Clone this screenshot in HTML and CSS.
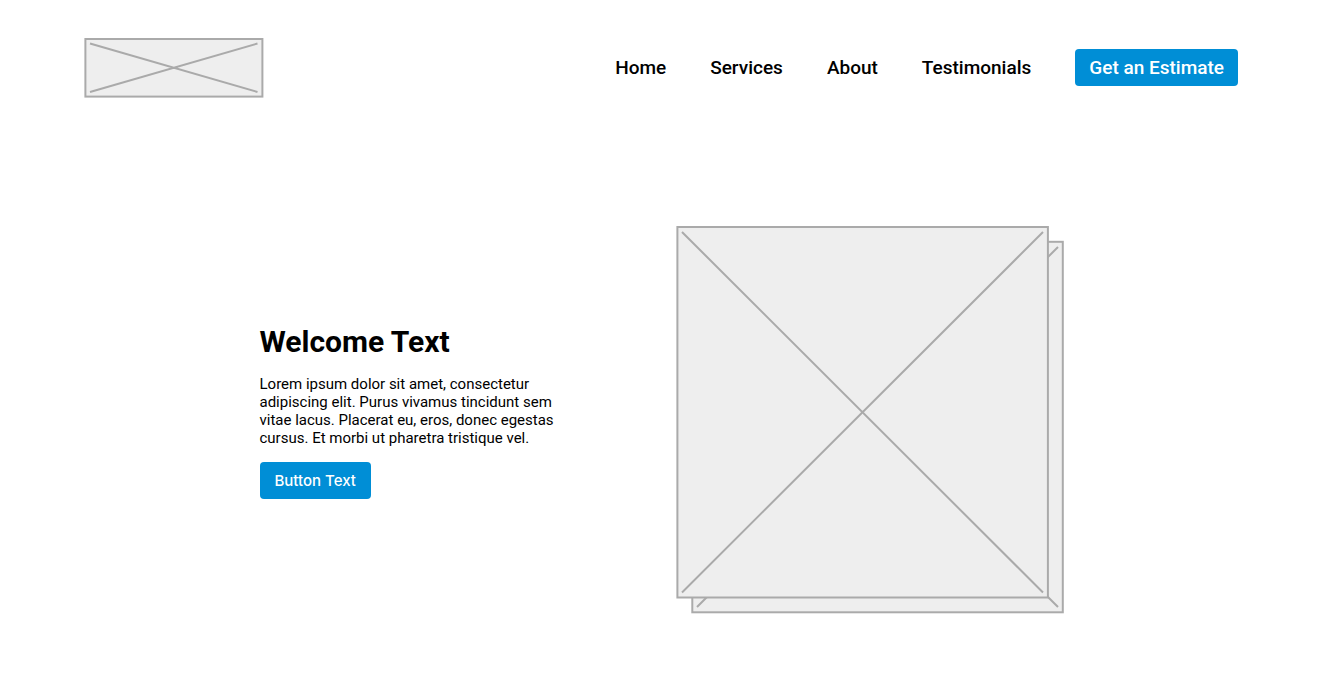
FILE: index.html
```html
<!DOCTYPE html>
<html lang="en">
<head>
<meta charset="utf-8">
<meta name="viewport" content="width=device-width, initial-scale=1">
<title>Welcome</title>
<link rel="stylesheet" href="styles.css">
</head>
<body>
<header class="site-header">
  <svg class="logo" viewBox="0 0 180 60" role="img" aria-label="Logo">
    <rect class="frame" x="1.4" y="1" width="177" height="57.6"/>
    <path class="cross" d="M6 5.5 173.5 54M173.5 5.5 6 54"/>
  </svg>
  <nav class="nav">
    <a href="#home">Home</a>
    <a href="#services">Services</a>
    <a href="#about">About</a>
    <a href="#testimonials">Testimonials</a>
    <button class="button button-large" type="button">Get an Estimate</button>
  </nav>
</header>
<main class="hero">
  <section class="intro">
    <h1>Welcome Text</h1>
    <p>Lorem ipsum dolor sit amet, consectetur adipiscing elit. Purus vivamus tincidunt sem vitae lacus. Placerat eu, eros, donec egestas cursus. Et morbi ut pharetra tristique vel.</p>
    <button class="button" type="button">Button Text</button>
  </section>
  <svg class="gallery" viewBox="0 0 388 388" role="img" aria-label="Image gallery">
    <rect class="frame" x="16.3" y="15.8" width="370.5" height="370.5"/>
    <path class="cross" d="M21 21 382 381M382 21 21 381"/>
    <rect class="frame" x="1.4" y="1" width="370.5" height="370.5"/>
    <path class="cross" d="M6 6 367 366.5M367 6 6 366.5"/>
  </svg>
</main>
</body>
</html>
```
FILE: styles.css
```css
* {
  box-sizing: border-box;
}

body {
  margin: 0;
  background: #fff;
  color: #000;
  font-family: Roboto, "Liberation Sans", sans-serif;
}

.site-header {
  display: flex;
  align-items: center;
  justify-content: space-between;
  padding: 38px 89px 0 84px;
}

.logo {
  width: 180px;
  height: 60px;
}

.frame,
.cross {
  fill: #eee;
  stroke: #aaa;
  stroke-width: 2;
}

.cross {
  fill: none;
}

.nav {
  display: flex;
  align-items: center;
  gap: 44px;
  padding-bottom: 2px;
  font-size: 19px;
  font-weight: 500;
}

.nav a {
  color: inherit;
  text-decoration: none;
}

.button {
  height: 37px;
  padding: 0 15px;
  border: 0;
  border-radius: 4px;
  background: #008ed6;
  color: #fff;
  font-family: Inter, sans-serif;
  font-size: 15px;
  font-weight: 500;
}

.button-large {
  padding: 0 14px;
  font-family: inherit;
  font-size: 19px;
}

.hero {
  display: flex;
  align-items: center;
  justify-content: center;
  gap: 116px;
  padding: 128px 4px 69px 0;
}

.intro {
  width: 300px;
  padding-bottom: 18px;
}

h1 {
  margin: 0 0 15px;
  font-size: 30px;
  line-height: 36px;
  font-weight: 700;
}

p {
  margin: 0 0 15px;
  font-size: 15px;
  line-height: 18px;
}

.gallery {
  width: 388px;
  height: 388px;
}
```
